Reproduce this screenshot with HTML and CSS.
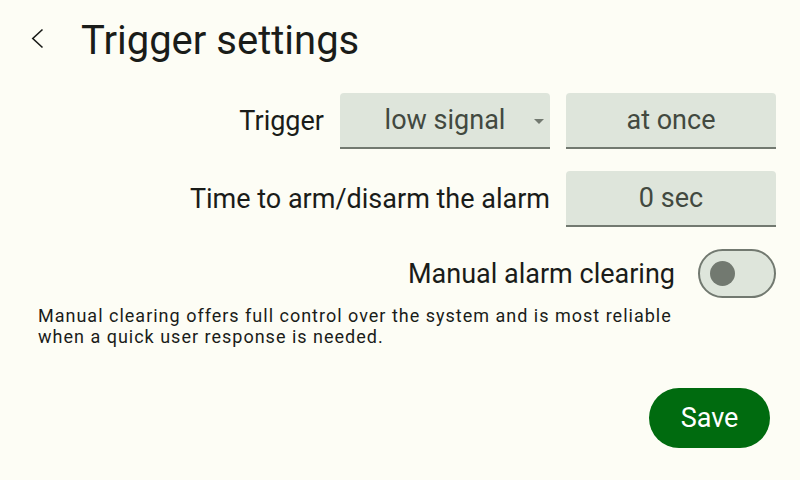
FILE: index.html
```html
<!DOCTYPE html>
<html lang="en">
	<head>
		<meta charset="UTF-8" />
		<meta name="viewport" content="width=device-width, initial-scale=1.0" />
		<title>Trigger settings</title>
		<link rel="stylesheet" href="styles.css">
	</head>
	<body>
		<div class="screen">
			<header class="topbar">
				<button class="backbtn" aria-label="Back">
					<svg width="24" height="24" viewBox="0 0 24 24">
						<polyline points="16.5,1.5 6.8,10.5 16.5,19.5" fill="none" stroke="#1a1c19" stroke-width="1.6" />
					</svg>
				</button>
				<h1>Trigger settings</h1>
			</header>
			<main class="form">
				<div class="row">
					<span class="label">Trigger</span>
					<div class="field select">
						low signal
						<span class="caret"></span>
					</div>
					<div class="field">at once</div>
				</div>
				<div class="row">
					<span class="label">Time to arm/disarm the alarm</span>
					<div class="field">0 sec</div>
				</div>
				<div class="row toggle-row">
					<span class="label">Manual alarm clearing</span>
					<div class="switch"><span class="knob"></span></div>
				</div>
				<p class="hint">
					Manual clearing offers full control over the system and is most reliable<br />
					when a quick user response is needed.
				</p>
			</main>
			<div class="actions">
				<button class="savebtn">Save</button>
			</div>
		</div>
	</body>
</html>
```

FILE: styles.css
```css
body,
html {
	margin: 0;
	height: 100%;
	font-family: Roboto, "Liberation Sans", Arial, sans-serif;
	color: #1a1c19;
	background-color: #fdfdf5;
}
.screen {
	display: flex;
	flex-direction: column;
	height: 480px;
	box-sizing: border-box;
}
.topbar {
	display: flex;
	align-items: center;
	height: 80px;
	padding-left: 26px;
}
.backbtn {
	display: flex;
	padding: 0;
	border: none;
	background: none;
	width: 24px;
	height: 24px;
	margin-right: 31px;
}
h1 {
	margin: 0;
	font-size: 40px;
	font-weight: 400;
}
.form {
	padding: 13px 24px 0 38px;
}
.row {
	display: flex;
	justify-content: flex-end;
	align-items: center;
	gap: 16px;
	margin-bottom: 22px;
}
.label {
	font-size: 27px;
}
.field {
	position: relative;
	display: flex;
	align-items: center;
	justify-content: center;
	width: 210px;
	height: 54px;
	background-color: #dee5db;
	border-bottom: 2px solid #727970;
	border-radius: 4px 4px 0 0;
	font-size: 27px;
	color: #424940;
}
.caret {
	position: absolute;
	right: 6px;
	top: 26px;
	width: 0;
	height: 0;
	border-left: 5px solid transparent;
	border-right: 5px solid transparent;
	border-top: 5px solid #727970;
}
.toggle-row {
	gap: 23px;
	margin-bottom: 7px;
}
.switch {
	display: flex;
	align-items: center;
	width: 64px;
	height: 45px;
	border: 2px solid #727970;
	border-radius: 25px;
	background-color: #dee5db;
	padding-left: 10px;
}
.knob {
	width: 25px;
	height: 25px;
	border-radius: 50%;
	background-color: #727970;
}
.hint {
	margin: 0;
	font-size: 18px;
	line-height: 21px;
	letter-spacing: 1px;
}
.actions {
	display: flex;
	justify-content: flex-end;
	padding: 41px 30px 0 0;
}
.savebtn {
	width: 121px;
	height: 60px;
	border: none;
	border-radius: 30px;
	background-color: #006b0f;
	color: #fff;
	font-family: Roboto, "Liberation Sans", Arial, sans-serif;
	font-size: 27px;
}
```
